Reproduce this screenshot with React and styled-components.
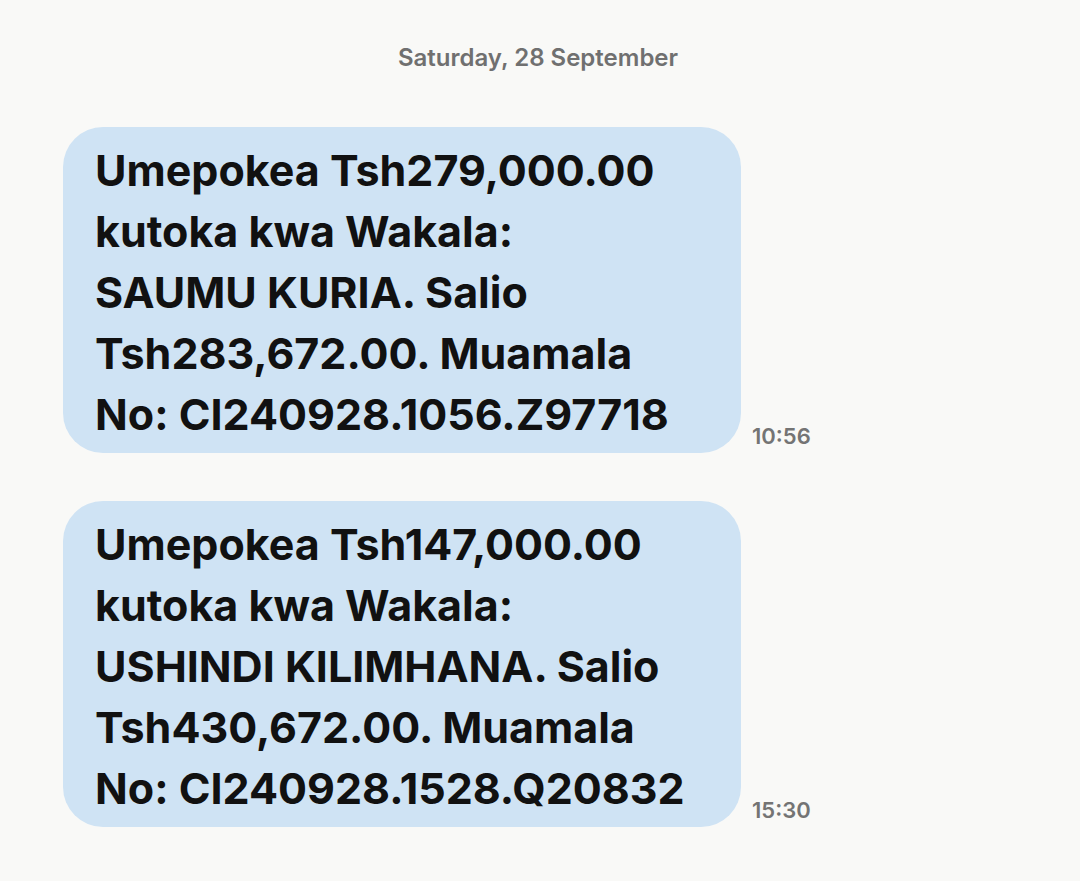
import React from 'react';
import styled, { createGlobalStyle } from 'styled-components';

const Global = createGlobalStyle`
    body {
        margin: 0;
        background: #f9f9f7;
        font-family: Inter, "Noto Sans", sans-serif;
    }
`
const Thread = styled.div`
    width: 1080px;
    height: 881px;
    overflow: hidden;
    display: flex;
    flex-direction: column;
    padding: 43px 0 0 63px;
    box-sizing: border-box;
`
const DateHeader = styled.div`
    width: 950px;
    text-align: center;
    font-size: 24px;
    font-weight: 600;
    color: #707070;
    line-height: 29px;
`
const Row = styled.div`
    display: flex;
    align-items: flex-end;
    margin-top: ${p => p.first ? '55px' : '48px'};
`
const Bubble = styled.div`
    width: 678px;
    height: 326px;
    box-sizing: border-box;
    background: #cfe3f4;
    border-radius: 40px;
    padding: 13px 16px 0 32px;
    font-size: 43px;
    font-weight: 700;
    line-height: 61px;
    color: #111;
    white-space: nowrap;
`
const Time = styled.div`
    font-size: 22px;
    font-weight: 600;
    color: #747474;
    margin: 0 0 4px 11px;
`

const messages = [
    {
        lines: ['Umepokea Tsh279,000.00', 'kutoka kwa Wakala:', 'SAUMU KURIA. Salio', 'Tsh283,672.00. Muamala', 'No: CI240928.1056.Z97718'],
        time: '10:56'
    },
    {
        lines: ['Umepokea Tsh147,000.00', 'kutoka kwa Wakala:', 'USHINDI KILIMHANA. Salio', 'Tsh430,672.00. Muamala', 'No: CI240928.1528.Q20832'],
        time: '15:30'
    }
]

export default function App() {
    return <>
        <Global />
        <Thread>
            <DateHeader>Saturday, 28 September</DateHeader>
            {messages.map((m, i) => <Row key={i} first={i === 0}>
                <Bubble>
                    {m.lines.map((l, j) => <div key={j}>{l}</div>)}
                </Bubble>
                <Time>{m.time}</Time>
            </Row>)}
        </Thread>
    </>
}
